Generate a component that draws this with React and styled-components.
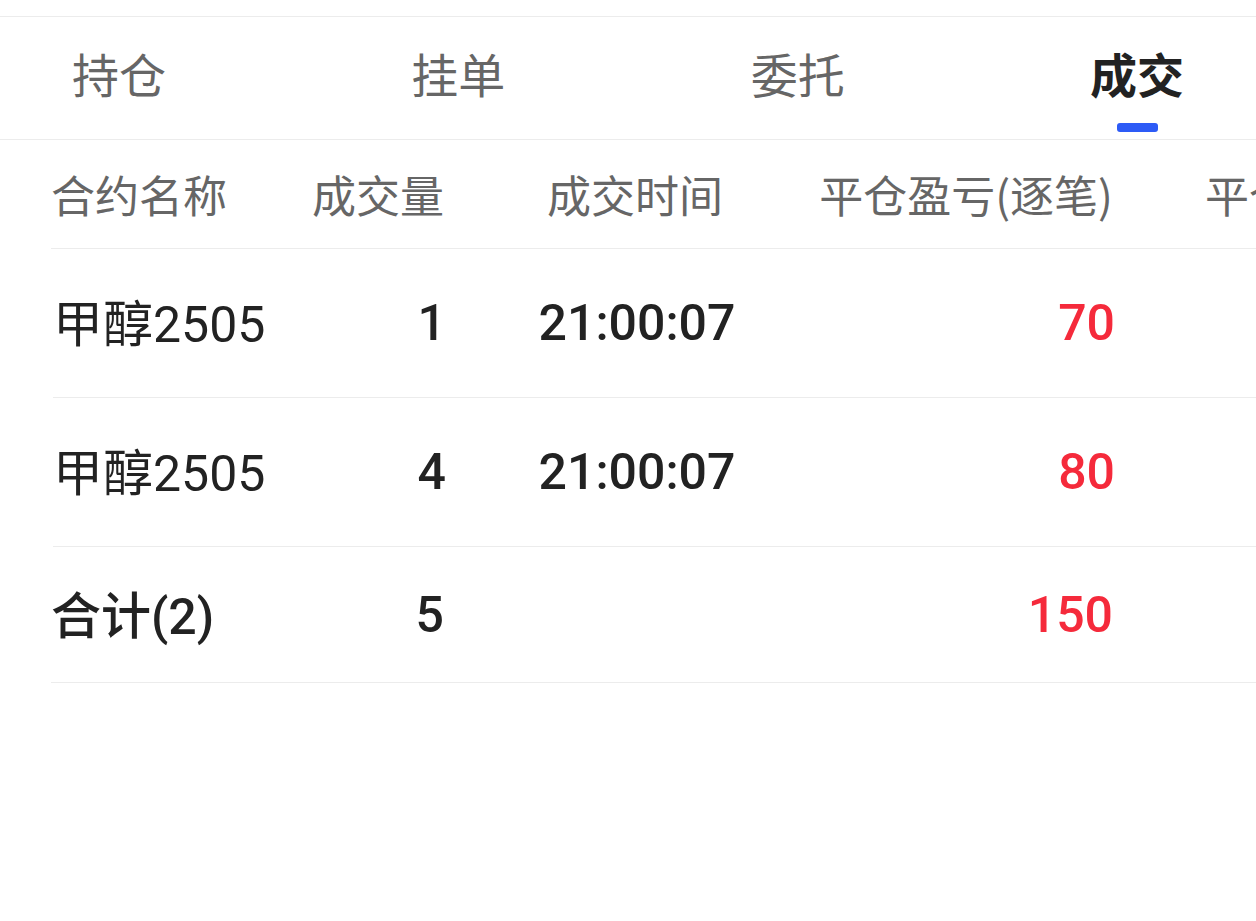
import React from "react";
import styled, { createGlobalStyle } from "styled-components";

const GlobalStyle = createGlobalStyle`
  html, body { margin: 0; padding: 0; background: #ffffff; }
  body { font-family: Roboto, "Noto Sans CJK SC", sans-serif; }
  * { box-sizing: border-box; }
`;

const Page = styled.div`
  width: 1256px;
  height: 921px;
  padding-top: 16px;
  background: #ffffff;
  overflow: hidden;
`;

const TabBar = styled.div`
  display: flex;
  justify-content: space-between;
  align-items: stretch;
  height: 124px;
  padding: 0 72px;
  border-top: 1px solid #ececec;
  border-bottom: 1px solid #ececec;
`;

const Tab = styled.div`
  position: relative;
  display: flex;
  align-items: center;
  justify-content: center;
  padding-bottom: 12px;
  font-family: "Noto Sans CJK SC", sans-serif;
  font-size: 47px;
  font-weight: ${(p) => (p.$active ? 700 : 400)};
  color: ${(p) => (p.$active ? "#222222" : "#666666")};
  white-space: nowrap;
`;

const Indicator = styled.span`
  position: absolute;
  left: 50%;
  bottom: 7px;
  width: 41px;
  height: 9px;
  margin-left: -20px;
  border-radius: 3px;
  background: #2d5bf6;
`;

const Table = styled.div`
  padding-left: 51px;
  overflow: hidden;
`;

const Row = styled.div`
  display: grid;
  grid-template-columns: 200px 193px 376px 293px 300px;
  align-items: center;
  height: ${(p) => p.$h}px;
  border-bottom: 1px solid #ececec;
  margin-left: ${(p) => p.$indent || 0}px;
  width: 1300px;
`;

const Cell = styled.div`
  display: flex;
  justify-content: ${(p) =>
    p.$align === "right" ? "flex-end" : p.$align === "center" ? "center" : "flex-start"};
  padding-left: ${(p) => p.$pl || 0}px;
  white-space: nowrap;
`;

const HeadText = styled.span`
  font-family: "Noto Sans CJK SC", sans-serif;
  font-size: 44px;
  color: #666666;
`;

const NameText = styled.span`
  font-family: Roboto, "Noto Sans CJK SC", sans-serif;
  font-size: 50px;
  font-weight: ${(p) => (p.$bold ? 500 : 400)};
  color: #222222;
  position: relative;
  top: -3px;
`;

const NumText = styled.span`
  font-family: Roboto, "Noto Sans CJK SC", sans-serif;
  font-size: 50px;
  font-weight: 500;
  color: ${(p) => (p.$red ? "#f52a3b" : "#222222")};
`;

const tabs = ["持仓", "挂单", "委托", "成交"];

const rows = [
  { name: "甲醇2505", qty: "1", time: "21:00:07", pnl: "70" },
  { name: "甲醇2505", qty: "4", time: "21:00:07", pnl: "80" },
];

export default function App() {
  return (
    <>
      <GlobalStyle />
      <Page>
        <TabBar>
          {tabs.map((t, i) => (
            <Tab key={t} $active={i === 3}>
              {t}
              {i === 3 && <Indicator />}
            </Tab>
          ))}
        </TabBar>
        <Table>
          <Row $h={109}>
            <Cell><HeadText>合约名称</HeadText></Cell>
            <Cell $align="right"><HeadText>成交量</HeadText></Cell>
            <Cell $align="center" $pl={6}><HeadText>成交时间</HeadText></Cell>
            <Cell $align="right"><HeadText>平仓盈亏(逐笔)</HeadText></Cell>
            <Cell $pl={92}><HeadText>平仓盈亏(盯市)</HeadText></Cell>
          </Row>
          {rows.map((r, i) => (
            <Row key={i} $h={149} $indent={2}>
              <Cell><NameText>{r.name}</NameText></Cell>
              <Cell $align="right"><NumText>{r.qty}</NumText></Cell>
              <Cell $align="center" $pl={6}><NumText>{r.time}</NumText></Cell>
              <Cell $align="right"><NumText $red>{r.pnl}</NumText></Cell>
              <Cell />
            </Row>
          ))}
          <Row $h={136}>
            <Cell><NameText $bold>合计(2)</NameText></Cell>
            <Cell $align="right"><NumText>5</NumText></Cell>
            <Cell />
            <Cell $align="right"><NumText $red>150</NumText></Cell>
            <Cell />
          </Row>
        </Table>
      </Page>
    </>
  );
}
